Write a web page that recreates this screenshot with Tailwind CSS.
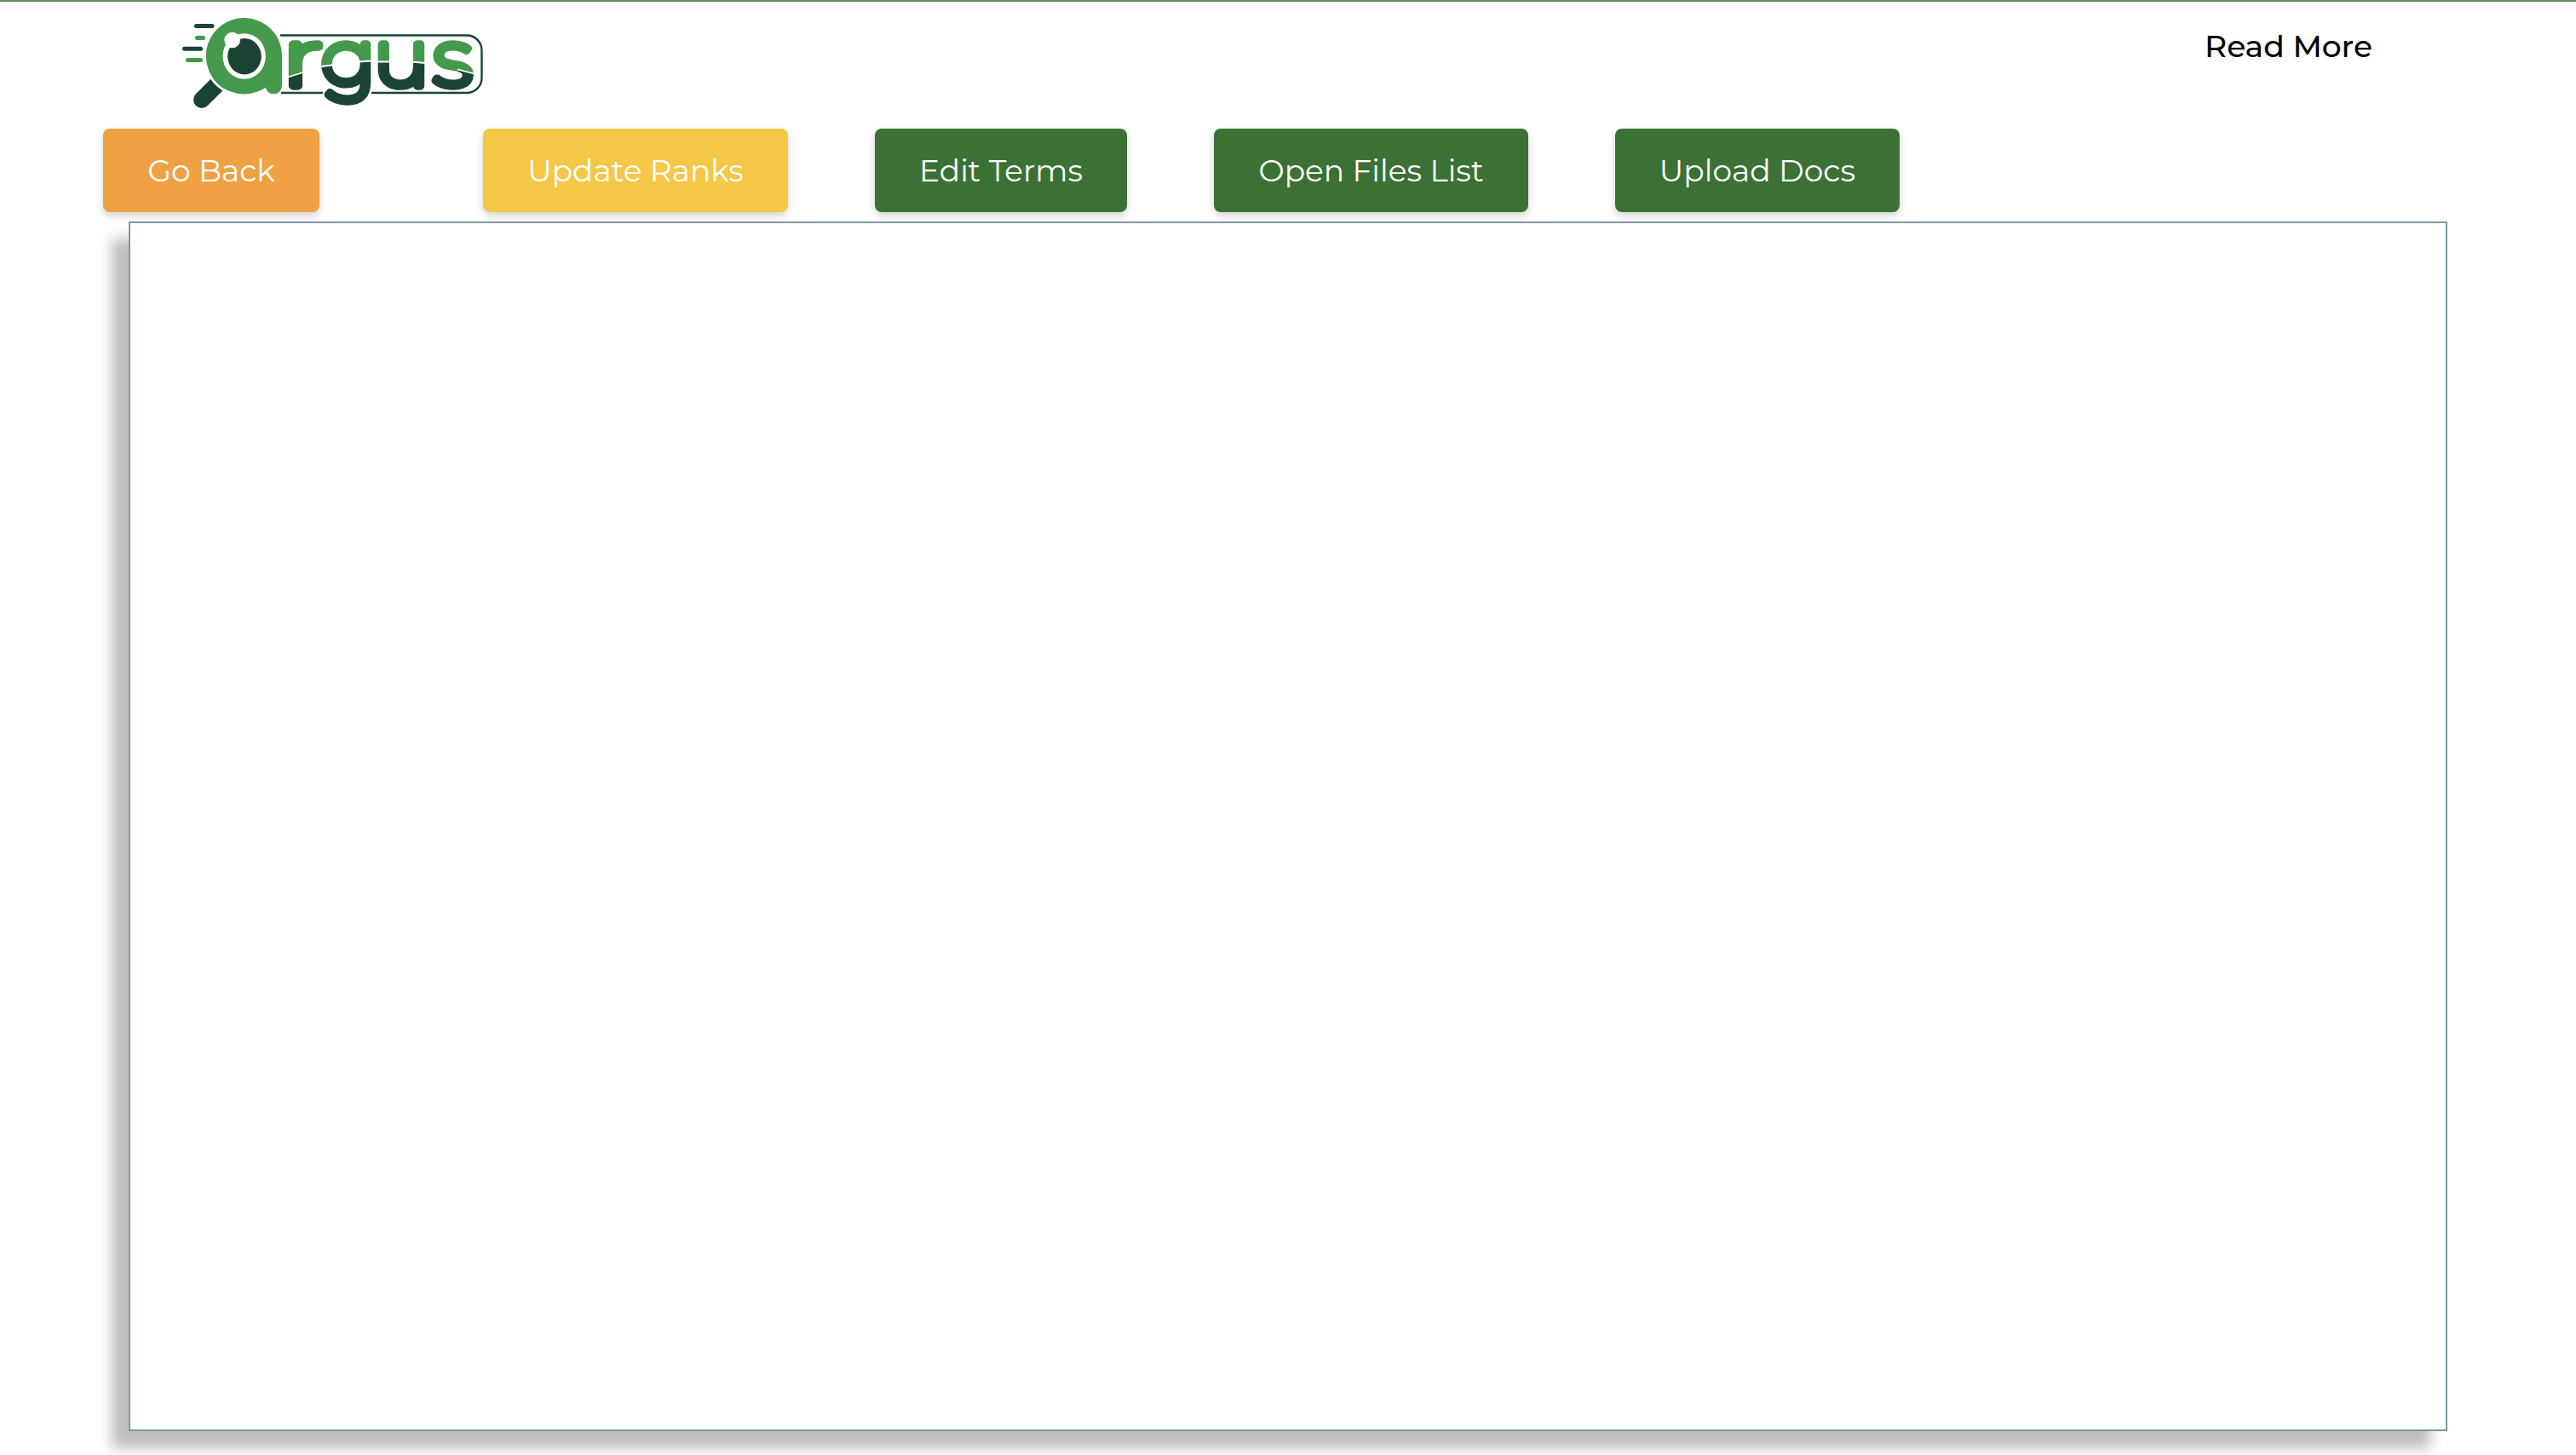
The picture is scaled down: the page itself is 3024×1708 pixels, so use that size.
<!DOCTYPE html>
<html lang="en">
<head>
<meta charset="utf-8">
<title>Argus</title>
<script src="https://cdn.jsdelivr.net/npm/@tailwindcss/browser@4"></script>
</head>
<body class="bg-white">
<div class="h-[1708px] w-[3024px] overflow-hidden border-t-2 border-[#62855f] font-['Montserrat','Inter',sans-serif]">
  <header class="flex h-[149px] items-start justify-between pl-[200px] pr-[239px]">
    <svg class="h-[138px] w-[380px]" viewBox="200 2 380 138" role="img" aria-label="argus">
      <defs>
        <pattern id="split" patternUnits="userSpaceOnUse" x="0" y="0" width="600" height="160">
          <rect width="600" height="160" fill="#1b4434"/>
          <path d="M330 0H600V98L556 86.500L538 81.500V86L503 85.500L499 74L437 71.500L376 78.500L356 85L330 93Z" fill="#44994d"/>
          <path d="M330 93L356 85M374 78.500L420 72.500L437 71.500M441 72.500H482L500 74M537 81.300L558 87" fill="none" stroke="#fff" stroke-width="1.8"/>
        </pattern>
      </defs>
      <path d="M329 41.500H548A17.500 17.500 0 0 1 565.500 59V91.500A17.500 17.500 0 0 1 548 109H436M379 109H330" fill="none" stroke="#1b4434" stroke-width="2.400"/>
      <g fill="none" stroke-width="5" stroke-linecap="round">
        <path d="M230.500 30.500H249M216.500 57.300H235.500" stroke="#1b4434"/>
        <path d="M231.500 44.500H238.500M220.500 70.500H235.500" stroke="#44994d"/>
      </g>
      <path d="M255 99L236.800 117.200" fill="none" stroke="#1b4434" stroke-width="19.500" stroke-linecap="round"/>
      <path d="M286.500 65.800L235 100L262 120Z" fill="none"/>
      <circle cx="286.500" cy="65.800" r="46.200" fill="none" stroke="#fff" stroke-width="3" stroke-dasharray="85 400" transform="rotate(95 286.500 65.800)"/>
      <circle cx="286.500" cy="65.800" r="44.700" fill="#44994d"/>
      <rect x="311.500" y="64" width="19.500" height="46.300" rx="9.500" fill="#44994d"/>
      <rect x="320" y="64" width="11" height="30" fill="#44994d"/>
      <ellipse cx="286.700" cy="66" rx="25.200" ry="26.700" fill="#fff"/>
      <ellipse cx="287" cy="66.200" rx="19.800" ry="21.200" fill="#1b4434"/>
      <circle cx="272.700" cy="47" r="9.300" fill="#fff"/>
      <text y="100.500" font-family="Montserrat" font-size="94" font-weight="200" fill="url(#split)" stroke="url(#split)" stroke-width="9.500" stroke-linejoin="round"><tspan x="331.500" textLength="47" lengthAdjust="spacingAndGlyphs">r</tspan><tspan x="377" textLength="64" lengthAdjust="spacingAndGlyphs">g</tspan><tspan x="438.300" textLength="66" lengthAdjust="spacingAndGlyphs">u</tspan><tspan x="508.500" textLength="46" lengthAdjust="spacingAndGlyphs">s</tspan></text>
    </svg>
    <a class="mt-[29px] text-[36px] leading-[46px] font-medium text-black">Read More</a>
  </header>
  <nav class="flex h-[98px] gap-[102px] pl-[121px] text-[36px] font-normal text-white">
    <button class="mr-[90px] w-[254px] rounded-[8px] bg-[#f0a144] shadow-[0_4px_10px_rgba(0,0,0,0.18)]">Go Back</button>
    <button class="w-[358px] rounded-[8px] bg-[#f5c747] shadow-[0_4px_10px_rgba(0,0,0,0.18)]">Update Ranks</button>
    <button class="w-[296px] rounded-[8px] bg-[#3c7136] shadow-[0_4px_10px_rgba(0,0,0,0.18)]">Edit Terms</button>
    <button class="w-[369px] rounded-[8px] bg-[#3c7136] shadow-[0_4px_10px_rgba(0,0,0,0.18)]">Open Files List</button>
    <button class="w-[334px] rounded-[8px] bg-[#3c7136] shadow-[0_4px_10px_rgba(0,0,0,0.18)]">Upload Docs</button>
  </nav>
  <main class="ml-[151px] mt-[11px] h-[1420px] w-[2722px] border-2 border-[#7c98a0] bg-white shadow-[-20px_20px_15px_#bebebe]"></main>
</div>
</body>
</html>
